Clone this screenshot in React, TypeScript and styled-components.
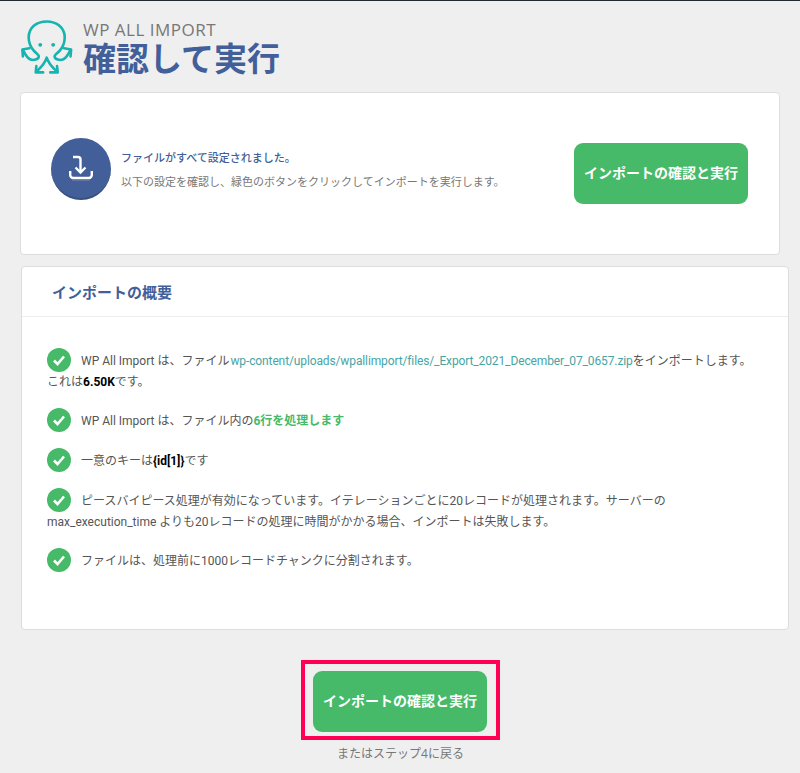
import React from "react";
import styled, { createGlobalStyle } from "styled-components";

const FONT = `"Open Sans", "Noto Sans CJK JP", sans-serif`;
const BODY_FONT = `Roboto, "Noto Sans CJK JP", sans-serif`;

const GlobalStyle = createGlobalStyle`
  html, body {
    margin: 0;
    padding: 0;
    background: #efefef;
  }
  * {
    box-sizing: border-box;
  }
`;

const Page = styled.div`
  width: 800px;
  height: 773px;
  overflow: hidden;
  border-top: 1px solid #23282d;
  padding: 0 11px 0 20px;
  font-family: ${FONT};
`;

const Header = styled.header`
  display: flex;
  align-items: flex-start;
  height: 91px;
  padding-top: 18px;
`;

const Logo = styled.svg`
  width: 54px;
  height: 58px;
  flex: none;
`;

const Titles = styled.div`
  margin-left: 9px;
  padding-top: 2px;
`;

const Brand = styled.div`
  font-size: 17px;
  line-height: 18px;
  color: #777777;
  letter-spacing: 0.5px;
`;

const Title = styled.h1`
  margin: 0;
  font-size: 33px;
  line-height: 39px;
  font-weight: 700;
  color: #425f9a;
`;

const Panel = styled.section`
  background: #ffffff;
  border: 1px solid #dddddd;
  border-radius: 4px;
`;

const TopPanel = styled(Panel)`
  height: 163px;
  display: flex;
  align-items: center;
  justify-content: space-between;
  padding: 0 31px 0 30px;
  margin-right: 9px;
  margin-bottom: 11px;
`;

const Intro = styled.div`
  display: flex;
  align-items: center;
  margin-bottom: 9px;
`;

const Badge = styled.div`
  width: 60px;
  height: 62px;
  flex: none;
  border-radius: 50%;
  background: #425f9a;
  border-bottom: 2px solid #36507f;
  display: flex;
  align-items: center;
  justify-content: center;
`;

const IntroText = styled.div`
  margin-left: 10px;
  margin-top: 2px;
`;

const IntroTitle = styled.p`
  margin: 0 0 8px;
  font-size: 11px;
  line-height: 16px;
  color: #425f9a;
  font-weight: 500;
`;

const IntroNote = styled.p`
  margin: 0;
  font-size: 11px;
  line-height: 16px;
  color: #777777;
`;

const GreenButton = styled.button`
  display: block;
  width: 174px;
  height: 61px;
  border: 0;
  border-radius: 9px;
  background: #46ba69;
  color: #ffffff;
  font-family: ${FONT};
  font-size: 14px;
  font-weight: 700;
  padding: 0 0 3px;
`;

const SummaryPanel = styled(Panel)`
  height: 364px;
  margin-left: 1px;
`;

const SummaryHead = styled.div`
  height: 50px;
  padding: 0 30px;
  display: flex;
  align-items: center;
  border-bottom: 1px solid #eeeeee;
  font-size: 15px;
  font-weight: 700;
  color: #425f9a;
`;

const SummaryBody = styled.div`
  padding: 31px 30px 0 25px;
`;

const Item = styled.p`
  margin: 0 0 16px;
  font-family: ${BODY_FONT};
  font-size: 12px;
  line-height: 20px;
  color: #555555;
`;

const Check = styled.svg`
  width: 24px;
  height: 24px;
  vertical-align: -7px;
  margin-right: 10px;
`;

const FileLink = styled.span`
  margin-left: 1px;
  letter-spacing: -0.12px;
  color: #46a5a5;
`;

const Strong = styled.strong`
  color: #000000;
`;

const GreenText = styled.span`
  color: #46ba69;
  font-weight: 700;
`;

const Footer = styled.div`
  display: flex;
  flex-direction: column;
  align-items: center;
  margin-top: 30px;
  padding-right: 8px;
`;

const Highlight = styled.div`
  border: 4px solid #ff0055;
  padding: 7px 9px 4px 8px;
`;

const BackLink = styled.div`
  margin-top: 6px;
  font-size: 12px;
  line-height: 16px;
  color: #777777;
`;

const CheckIcon = () => (
  <Check viewBox="0 0 24 24">
    <circle cx="12" cy="12" r="12" fill="#46ba69" />
    <path d="M7 12.5l3.5 3.5L17 8.5" fill="none" stroke="#ffffff" strokeWidth="2.6" />
  </Check>
);

const OctopusLogo = () => (
  <Logo viewBox="0 0 56 58" fill="none" stroke="#14b4b0" strokeWidth="2.7" strokeLinecap="round" strokeLinejoin="round">
    <path d="M3 31C5 35 8 40 11 41C14 42 19 41 19.5 38C20 36 17 35 14.5 32C11 28 9 23 9 18C9 8 17 1.5 27.7 1.5C38 1.5 46.4 8 46.4 18C46.4 23 44.5 28 41 32C38.4 35 35.4 36 35.9 38C36.4 41 41.4 42 44.4 41C47.4 40 50.4 35 52.4 31" />
    <path d="M9.7 29.3L2.5 30.5L3 37.7M45.7 29.3L53 30.5L52.4 37.7" />
    <path d="M17 53.5C22 49 26 45 27.7 39C29.4 45 33.4 49 38.4 53.5" />
    <path d="M17 47.7L16.3 54.3L24 54.3M38.4 47.7L39.1 54.3L31.4 54.3" />
    <circle cx="21" cy="25.7" r="2" fill="#14b4b0" stroke="none" />
    <circle cx="34.4" cy="25.7" r="2" fill="#14b4b0" stroke="none" />
  </Logo>
);

const ImportIcon = () => (
  <svg width="24" height="26" viewBox="0 0 24 26" fill="none" stroke="#ffffff" strokeWidth="2.4">
    <path d="M4 2H9a2.5 2.5 0 0 1 2.5 2.5V17" />
    <path d="M6.5 12.5L11.5 17.5L16.5 12.5" />
    <path d="M1.2 16V20a3 3 0 0 0 3 3H19.8a3 3 0 0 0 3-3V16" />
    <path d="M3 25H21" stroke="#7f7da6" strokeWidth="1.2" />
  </svg>
);

export default function App() {
  return (
    <Page>
      <GlobalStyle />
      <Header>
        <OctopusLogo />
        <Titles>
          <Brand>WP ALL IMPORT</Brand>
          <Title>確認して実行</Title>
        </Titles>
      </Header>

      <TopPanel>
        <Intro>
          <Badge>
            <ImportIcon />
          </Badge>
          <IntroText>
            <IntroTitle>ファイルがすべて設定されました。</IntroTitle>
            <IntroNote>以下の設定を確認し、緑色のボタンをクリックしてインポートを実行します。</IntroNote>
          </IntroText>
        </Intro>
        <GreenButton>インポートの確認と実行</GreenButton>
      </TopPanel>

      <SummaryPanel>
        <SummaryHead>インポートの概要</SummaryHead>
        <SummaryBody>
          <Item>
            <CheckIcon />
            WP All Import は、ファイル
            <FileLink>wp-content/uploads/wpallimport/files/_Export_2021_December_07_0657.zip</FileLink>
            をインポートします。これは<Strong>6.50K</Strong>です。
          </Item>
          <Item>
            <CheckIcon />
            WP All Import は、ファイル内の<GreenText>6行を処理します</GreenText>
          </Item>
          <Item>
            <CheckIcon />
            一意のキーは<Strong>{"{id[1]}"}</Strong>です
          </Item>
          <Item>
            <CheckIcon />
            ピースバイピース処理が有効になっています。イテレーションごとに20レコードが処理されます。サーバーのmax_execution_time よりも20レコードの処理に時間がかかる場合、インポートは失敗します。
          </Item>
          <Item>
            <CheckIcon />
            ファイルは、処理前に1000レコードチャンクに分割されます。
          </Item>
        </SummaryBody>
      </SummaryPanel>

      <Footer>
        <Highlight>
          <GreenButton>インポートの確認と実行</GreenButton>
        </Highlight>
        <BackLink>またはステップ4に戻る</BackLink>
      </Footer>
    </Page>
  );
}
